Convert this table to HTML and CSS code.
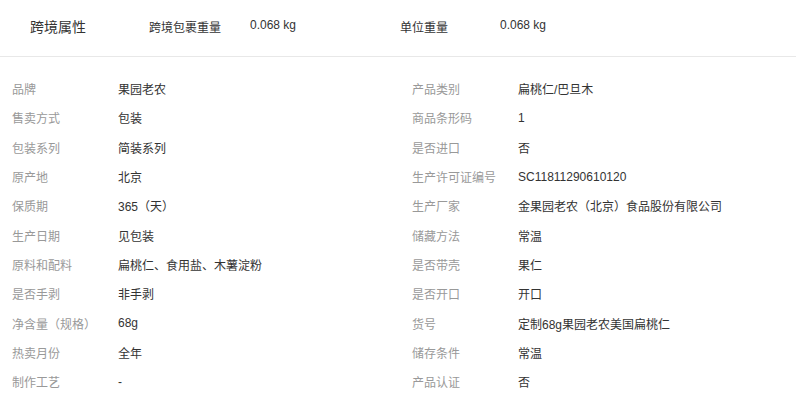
FILE: index.html
```html
<!DOCTYPE html>
<html lang="zh-CN">
<head>
    <meta charset="UTF-8">
    <title>商品属性</title>
    <link rel="stylesheet" href="styles.css">
</head>
<body>

    <!-- 跨境属性 -->
    <div class="cross-border">
        <div class="cb-title">跨境属性</div>
        <div class="cb-item">
            <span class="cb-label">跨境包裹重量</span>
            <span class="cb-value">0.068 kg</span>
        </div>
        <div class="cb-item cb-unit">
            <span class="cb-label">单位重量</span>
            <span class="cb-value">0.068 kg</span>
        </div>
    </div>

    <!-- 商品属性 -->
    <ul class="attr-list">
        <li><span class="attr-name">品牌</span><span class="attr-value">果园老农</span></li>
        <li><span class="attr-name">产品类别</span><span class="attr-value">扁桃仁/巴旦木</span></li>
        <li><span class="attr-name">售卖方式</span><span class="attr-value">包装</span></li>
        <li><span class="attr-name">商品条形码</span><span class="attr-value">1</span></li>
        <li><span class="attr-name">包装系列</span><span class="attr-value">简装系列</span></li>
        <li><span class="attr-name">是否进口</span><span class="attr-value">否</span></li>
        <li><span class="attr-name">原产地</span><span class="attr-value">北京</span></li>
        <li><span class="attr-name">生产许可证编号</span><span class="attr-value">SC11811290610120</span></li>
        <li><span class="attr-name">保质期</span><span class="attr-value">365（天）</span></li>
        <li><span class="attr-name">生产厂家</span><span class="attr-value">金果园老农（北京）食品股份有限公司</span></li>
        <li><span class="attr-name">生产日期</span><span class="attr-value">见包装</span></li>
        <li><span class="attr-name">储藏方法</span><span class="attr-value">常温</span></li>
        <li><span class="attr-name">原料和配料</span><span class="attr-value">扁桃仁、食用盐、木薯淀粉</span></li>
        <li><span class="attr-name">是否带壳</span><span class="attr-value">果仁</span></li>
        <li><span class="attr-name">是否手剥</span><span class="attr-value">非手剥</span></li>
        <li><span class="attr-name">是否开口</span><span class="attr-value">开口</span></li>
        <li><span class="attr-name">净含量（规格）</span><span class="attr-value">68g</span></li>
        <li><span class="attr-name">货号</span><span class="attr-value">定制68g果园老农美国扁桃仁</span></li>
        <li><span class="attr-name">热卖月份</span><span class="attr-value">全年</span></li>
        <li><span class="attr-name">储存条件</span><span class="attr-value">常温</span></li>
        <li><span class="attr-name">制作工艺</span><span class="attr-value">-</span></li>
        <li><span class="attr-name">产品认证</span><span class="attr-value">否</span></li>
    </ul>

</body>
</html>
```

FILE: styles.css
```css
body {
    margin: 0;
    padding: 0;
    background: #fff;
    color: #333;
    font-family: "Liberation Sans", Arial, "Noto Sans CJK SC", sans-serif;
    font-size: 12px;
}

.cross-border {
    display: flex;
    align-items: center;
    height: 52px;
    padding: 0 0 4px 30px;
    border-bottom: 1px solid #e8e8e8;
}

.cb-title {
    width: 119px;
    font-size: 14px;
    color: #333;
}

.cb-item {
    display: flex;
    width: 251px;
}

.cb-label {
    width: 101px;
}

.cb-unit .cb-label {
    width: 100px;
}

.attr-list {
    list-style: none;
    margin: 0;
    padding: 17px 0 0;
    display: grid;
    grid-template-columns: 400px 396px;
    grid-auto-rows: 29.3px;
}

.attr-list li {
    display: flex;
    align-items: center;
    padding-left: 12px;
}

.attr-name {
    width: 106px;
    color: #999;
}

.attr-value {
    color: #333;
}
```
